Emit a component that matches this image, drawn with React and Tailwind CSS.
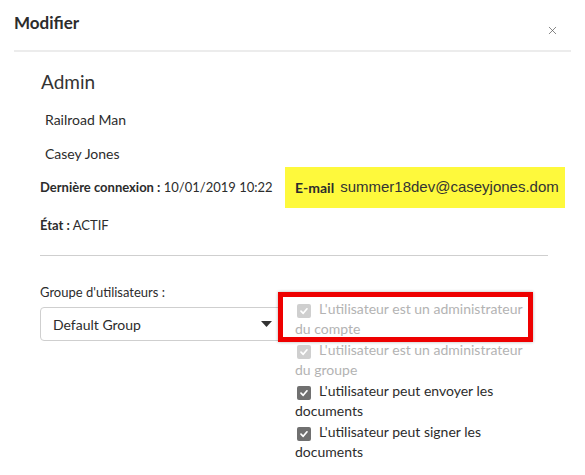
import { X } from "lucide-react";

const font = { fontFamily: "Lato, 'Open Sans', sans-serif" };

const Check = ({ disabled }) => (
  <span
    className={`inline-flex items-center justify-center w-[14px] h-[14px] rounded-[2px] align-[-2px] ml-[2px] mr-[8px] ${disabled ? "bg-[#cfcfcf]" : "bg-[#707070]"}`}
  >
    <svg width="10" height="10" viewBox="0 0 10 10">
      <path d="M2 5.2 L4.2 7.3 L8 2.8" fill="none" stroke="white" strokeWidth="1.7" strokeLinecap="round" strokeLinejoin="round" />
    </svg>
  </span>
);

const CheckItem = ({ disabled, children }) => (
  <div className={`w-[236px] text-[14px] leading-[20px] ${disabled ? "text-[#b3b3b3]" : "text-[#2c2c2c]"}`}>
    <Check disabled={disabled} />
    {children}
  </div>
);

export default function App() {
  return (
    <div className="w-[585px] h-[475px] bg-white overflow-hidden relative text-[#2c2c2c]" style={font}>
      <div className="flex items-start justify-between px-[14px] pt-[13px] h-[50px]">
        <h2 className="text-[17px] leading-[20px] font-bold text-[#2c2c2c]">Modifier</h2>
        <X className="mt-[11px] mr-[12px] text-[#555]" size={13} strokeWidth={1.3} />
      </div>
      <div className="mx-[14px] h-[2px] bg-[#ececec]" />

      <div className="pl-[40px] pr-[20px]">
        <div className="mt-[18px] ml-[1px] text-[19px] leading-[24px] text-[#333]">Admin</div>
        <div className="mt-[16px] ml-[5px] text-[14px] leading-[20px]">Railroad Man</div>
        <div className="mt-[14px] ml-[5px] text-[14px] leading-[20px]">Casey Jones</div>
        <div className="mt-[3px] flex items-center h-[41px]">
          <div className="w-[245px] shrink-0 text-[13px] whitespace-nowrap">
            <span className="font-bold">Dernière connexion :</span> 10/01/2019 10:22
          </div>
          <div className="h-[41px] w-[280px] shrink-0 bg-[#fef93c] flex items-center px-[10px] whitespace-nowrap">
            <span className="font-bold text-[14px] mr-[6px]">E-mail</span>
            <span style={{ fontFamily: "'Liberation Sans', Arial, sans-serif" }} className="text-[15px] text-[#333]">summer18dev@caseyjones.dom</span>
          </div>
        </div>
        <div className="mt-[7px] text-[13px] leading-[20px]">
          <span className="font-bold">État :</span> ACTIF
        </div>
        <div className="mt-[20px] h-px bg-[#cfcfcf] w-[508px]" />

        <div className="mt-[27px] flex">
          <div className="w-[242px] shrink-0">
            <div className="text-[13px] leading-[18px]">Groupe d'utilisateurs :</div>
            <div className="mt-[6px] h-[34px] border border-[#cfcfcf] rounded-[4px] flex items-center justify-between pl-[12px] pr-[9px] text-[14px]">
              <span>Default Group</span>
              <svg width="11" height="6" viewBox="0 0 11 6"><path d="M0 0 L11 0 L5.5 6 Z" fill="#333" /></svg>
            </div>
          </div>
          <div className="ml-[13px] mt-[16px] flex flex-col gap-[1px]">
            <CheckItem disabled>L'utilisateur est un administrateur du compte</CheckItem>
            <CheckItem disabled>L'utilisateur est un administrateur du groupe</CheckItem>
            <CheckItem>L'utilisateur peut envoyer les documents</CheckItem>
            <CheckItem>L'utilisateur peut signer les documents</CheckItem>
          </div>
        </div>
      </div>

      <div className="absolute left-[278px] top-[292px] w-[255px] h-[50px] border-[5px] border-[#ee0000] shadow-[0_0_3px_rgba(0,0,0,0.3)]" />
    </div>
  );
}
